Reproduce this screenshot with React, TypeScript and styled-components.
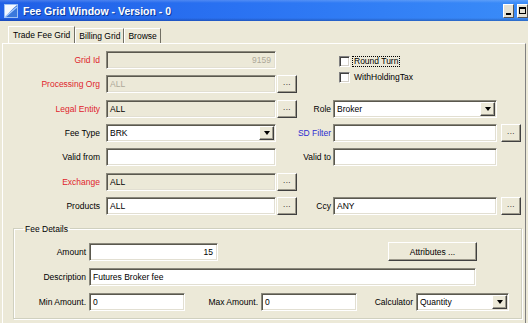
import styled, { createGlobalStyle } from 'styled-components';

const GlobalStyle = createGlobalStyle`
  html, body {
    margin: 0;
    padding: 0;
    background: #ece9d8;
  }
  body {
    font-family: "Liberation Sans", Arial, sans-serif;
    font-size: 8.5px;
    color: #000;
  }
`;

const Window = styled.div`
  width: 528px;
  height: 323px;
  overflow: hidden;
  display: flex;
  flex-direction: column;
  background: #ece9d8;
`;

const TitleBar = styled.div`
  flex: none;
  height: 21px;
  display: flex;
  align-items: center;
  padding-left: 4px;
  background:
    linear-gradient(to bottom, rgba(255, 255, 255, 0.18) 0, rgba(255, 255, 255, 0) 3px, rgba(0, 0, 0, 0) 18px, rgba(0, 0, 40, 0.25) 21px),
    linear-gradient(to right, #1f5fe6, #2a72f2 45%, #3a8cf8);
`;

const Title = styled.span`
  margin-left: 5px;
  font-size: 10.5px;
  font-weight: bold;
  color: #fff;
  text-shadow: 1px 1px 0 #0a3a9a;
  white-space: nowrap;
`;

const Controls = styled.div`
  margin-left: auto;
  display: flex;
  gap: 3px;
`;

const CtrlButton = styled.div`
  position: relative;
  width: 11px;
  height: 14px;
  box-sizing: border-box;
  background: #e4e1d4;
  border: 1px solid #fff;
  border-right-color: #555;
  border-bottom-color: #555;
`;

const MinGlyph = styled.span`
  position: absolute;
  left: 2px;
  bottom: 2px;
  width: 5px;
  height: 2px;
  background: #000;
`;

const MaxGlyph = styled.span`
  position: absolute;
  left: 1px;
  top: 2px;
  width: 7px;
  height: 7px;
  box-sizing: border-box;
  border: 1px solid #000;
  border-top-width: 2px;
`;

const TabStrip = styled.div`
  flex: none;
  height: 22px;
  display: flex;
  align-items: flex-end;
  padding-left: 8px;
`;

const Tab = styled.div<{ $active?: boolean }>`
  box-sizing: border-box;
  height: ${({ $active }) => ($active ? 17 : 15)}px;
  padding: 0 ${({ $active }) => ($active ? 4 : 3)}px;
  display: flex;
  align-items: center;
  border-left: 1px solid #fff;
  border-top: 1px solid #fff;
  border-right: 1px solid #716f64;
  white-space: nowrap;
  background: #ece9d8;
`;

const TabPanel = styled.div`
  flex: 1;
  margin: 0 2px;
  border-top: 1px solid #fff;
  border-left: 1px solid #fff;
  border-right: 1px solid #808080;
  padding-top: 7px;
`;

const FormGrid = styled.div`
  margin-left: 1px;
  display: grid;
  grid-template-columns: 102px 170px 21px 36px 164px 24px;
  grid-template-rows: repeat(7, 18px);
  row-gap: 6.33px;
  align-items: center;
`;

const tones = {
  red: '#e0242c',
  blue: '#2c2cd0',
  black: '#000',
};

const FieldLabel = styled.div<{ $tone?: keyof typeof tones }>`
  grid-column: 1;
  text-align: right;
  padding-right: 6px;
  color: ${({ $tone = 'black' }) => tones[$tone]};
  white-space: nowrap;
`;

const SideLabel = styled.div<{ $tone?: keyof typeof tones }>`
  grid-column: 4;
  text-align: right;
  padding-right: 2px;
  color: ${({ $tone = 'black' }) => tones[$tone]};
  white-space: nowrap;
`;

const Field = styled.div<{ $fill?: 'white' | 'panel'; $dim?: boolean; $right?: boolean; $w?: number }>`
  box-sizing: border-box;
  height: 18px;
  width: ${({ $w }) => ($w ? `${$w}px` : '100%')};
  flex: none;
  border-top: 1px solid #8a887c;
  border-left: 1px solid #8a887c;
  border-right: 1px solid #fff;
  border-bottom: 1px solid #fff;
  box-shadow: inset 1px 1px 0 #5a584e, inset -1px -1px 0 #e2dfd2;
  background: ${({ $fill = 'white' }) => ($fill === 'white' ? '#fff' : '#ece9d8')};
  color: ${({ $dim }) => ($dim ? '#aca899' : '#000')};
  text-align: ${({ $right }) => ($right ? 'right' : 'left')};
  line-height: 16px;
  padding: 0 4px 0 3px;
  white-space: nowrap;
  overflow: hidden;
`;

const raised = `
  box-sizing: border-box;
  background: #ece9d8;
  border-top: 1px solid #fff;
  border-left: 1px solid #fff;
  border-right: 1px solid #404040;
  border-bottom: 1px solid #404040;
  box-shadow: inset -1px -1px 0 #9d9a8c;
`;

const DotsButton = styled.div`
  ${raised}
  justify-self: end;
  width: 20px;
  height: 18px;
  display: flex;
  align-items: flex-end;
  justify-content: center;
  padding-bottom: 5px;
  font-size: 8px;
  line-height: 8px;
  letter-spacing: 0.5px;
`;

const ComboBox = styled(Field)`
  display: flex;
  align-items: center;
  padding-right: 1px;
`;

const ComboValue = styled.span`
  flex: 1;
`;

const ArrowButton = styled.div`
  ${raised}
  width: 15px;
  height: 14px;
  display: flex;
  align-items: center;
  justify-content: center;

  &::after {
    content: '';
    border-left: 3.5px solid transparent;
    border-right: 3.5px solid transparent;
    border-top: 4px solid #000;
  }
`;

const CheckList = styled.div`
  grid-column: 4 / 7;
  grid-row: 1 / 3;
  align-self: start;
  padding: 5px 0 0 42px;
  display: flex;
  flex-direction: column;
  gap: 6px;
`;

const CheckRow = styled.div`
  display: flex;
  align-items: center;
  height: 10px;
  gap: 2px;
`;

const CheckBox = styled.span`
  box-sizing: border-box;
  width: 11px;
  height: 11px;
  background: #fff;
  border-top: 1px solid #808080;
  border-left: 1px solid #808080;
  border-right: 1px solid #fff;
  border-bottom: 1px solid #fff;
  box-shadow: inset 1px 1px 0 #404040, inset -1px -1px 0 #d4d0c8;
`;

const CheckText = styled.span<{ $focused?: boolean }>`
  padding: 0 1px;
  line-height: 9px;
  border: 1px dotted ${({ $focused }) => ($focused ? '#000' : 'transparent')};
  white-space: nowrap;
`;

const GroupBox = styled.fieldset`
  margin: 9px 3px 0 10px;
  padding: 9px 0 7px 0;
  border: 1px solid #d0d0bf;
  box-shadow: 1px 1px 0 #fff, inset 1px 1px 0 #fff;
  min-width: 0;
  display: grid;
  grid-template-rows: repeat(3, 18px);
  row-gap: 7px;
`;

const Legend = styled.legend`
  margin-left: 9px;
  padding: 0 2px;
  line-height: 10px;
`;

const GroupRow = styled.div`
  display: flex;
  align-items: center;
  height: 18px;
`;

const GroupLabel = styled.div<{ $w: number }>`
  width: ${({ $w }) => $w}px;
  flex: none;
  box-sizing: border-box;
  text-align: right;
  padding-right: 3px;
  white-space: nowrap;
`;

const PushButton = styled.div`
  ${raised}
  margin-left: 170px;
  width: 89px;
  height: 19px;
  display: flex;
  align-items: center;
  justify-content: center;
`;

const AppIcon = () => (
  <svg width="14" height="14" viewBox="0 0 14 14">
    <rect x="0.5" y="0.5" width="13" height="13" fill="#f4f8ff" stroke="#9cc0f4" />
    <path d="M1 13 C5 9 8 5 13 1 L13 13 Z" fill="#3a78dc" />
    <path d="M1 13 C5 10 9 6 13 3" stroke="#a8ccff" strokeWidth="1.2" fill="none" />
  </svg>
);

const Combo = ({ value, w }: { value: string; w?: number }) => (
  <ComboBox $w={w}>
    <ComboValue>{value}</ComboValue>
    <ArrowButton />
  </ComboBox>
);

export default function App() {
  return (
    <Window>
      <GlobalStyle />
      <TitleBar>
        <AppIcon />
        <Title>Fee Grid Window - Version - 0</Title>
        <Controls>
          <CtrlButton>
            <MinGlyph />
          </CtrlButton>
          <CtrlButton>
            <MaxGlyph />
          </CtrlButton>
        </Controls>
      </TitleBar>

      <TabStrip>
        <Tab $active>Trade Fee Grid</Tab>
        <Tab>Billing Grid</Tab>
        <Tab>Browse</Tab>
      </TabStrip>

      <TabPanel>
        <FormGrid>
          <FieldLabel $tone="red">Grid Id</FieldLabel>
          <Field $fill="panel" $dim $right>9159</Field>
          <CheckList>
            <CheckRow>
              <CheckBox />
              <CheckText $focused>Round Turn</CheckText>
            </CheckRow>
            <CheckRow>
              <CheckBox />
              <CheckText>WithHoldingTax</CheckText>
            </CheckRow>
          </CheckList>

          <FieldLabel $tone="red">Processing Org</FieldLabel>
          <Field $fill="panel" $dim>ALL</Field>
          <DotsButton>...</DotsButton>

          <FieldLabel $tone="red">Legal Entity</FieldLabel>
          <Field $fill="panel">ALL</Field>
          <DotsButton>...</DotsButton>
          <SideLabel>Role</SideLabel>
          <Combo value="Broker" />

          <FieldLabel>Fee Type</FieldLabel>
          <Combo value="BRK" />
          <SideLabel $tone="blue">SD Filter</SideLabel>
          <Field />
          <DotsButton>...</DotsButton>

          <FieldLabel>Valid from</FieldLabel>
          <Field />
          <SideLabel>Valid to</SideLabel>
          <Field />

          <FieldLabel $tone="red">Exchange</FieldLabel>
          <Field $fill="panel">ALL</Field>
          <DotsButton>...</DotsButton>

          <FieldLabel>Products</FieldLabel>
          <Field>ALL</Field>
          <DotsButton>...</DotsButton>
          <SideLabel>Ccy</SideLabel>
          <Field>ANY</Field>
          <DotsButton>...</DotsButton>
        </FormGrid>

        <GroupBox>
          <Legend>Fee Details</Legend>
          <GroupRow>
            <GroupLabel $w={75}>Amount</GroupLabel>
            <Field $w={129} $right>15</Field>
            <PushButton>Attributes ...</PushButton>
          </GroupRow>
          <GroupRow>
            <GroupLabel $w={75}>Description</GroupLabel>
            <Field $w={387}>Futures Broker fee</Field>
          </GroupRow>
          <GroupRow>
            <GroupLabel $w={75}>Min Amount.</GroupLabel>
            <Field $w={96}>0</Field>
            <GroupLabel $w={76}>Max Amount.</GroupLabel>
            <Field $w={96}>0</Field>
            <GroupLabel $w={59}>Calculator</GroupLabel>
            <Combo value="Quantity" w={93} />
          </GroupRow>
        </GroupBox>
      </TabPanel>
    </Window>
  );
}
